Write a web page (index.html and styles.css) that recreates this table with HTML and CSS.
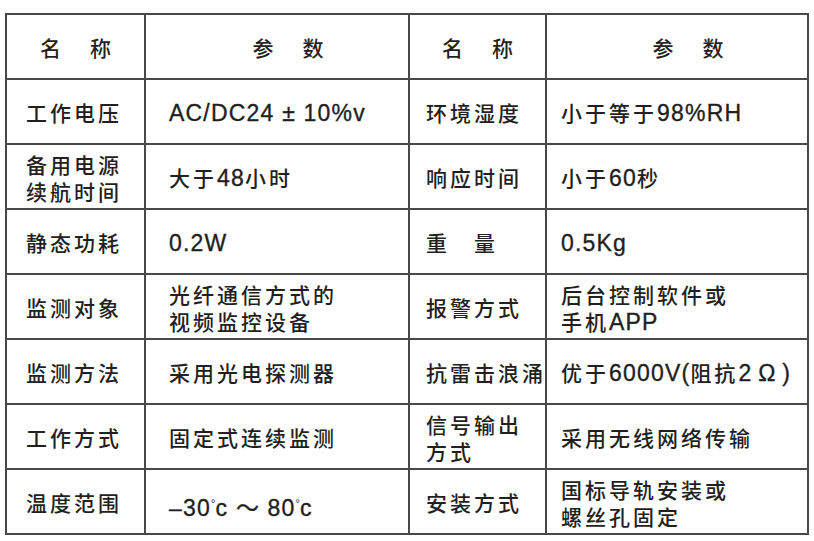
FILE: index.html
```html
<!DOCTYPE html>
<html lang="zh-CN">
<head>
<meta charset="utf-8">
<title>参数表</title>
<link rel="stylesheet" href="styles.css">
</head>
<body>
<div class="spec">
  <div class="cell c1 head"><div class="txt">名　称</div></div>
  <div class="cell c2 head"><div class="txt">参　数</div></div>
  <div class="cell c3 head"><div class="txt">名　称</div></div>
  <div class="cell c4 head"><div class="txt">参　数</div></div>

  <div class="cell c1"><div class="txt">工作电压</div></div>
  <div class="cell c2"><div class="txt"><span class="en">AC/DC24 ± 10%v</span></div></div>
  <div class="cell c3"><div class="txt">环境湿度</div></div>
  <div class="cell c4"><div class="txt">小于等于<span class="en">98%RH</span></div></div>

  <div class="cell c1"><div class="txt">备用电源<br>续航时间</div></div>
  <div class="cell c2"><div class="txt">大于<span class="en">48</span>小时</div></div>
  <div class="cell c3"><div class="txt">响应时间</div></div>
  <div class="cell c4"><div class="txt">小于<span class="en">60</span>秒</div></div>

  <div class="cell c1"><div class="txt">静态功耗</div></div>
  <div class="cell c2"><div class="txt"><span class="en">0.2W</span></div></div>
  <div class="cell c3"><div class="txt">重　量</div></div>
  <div class="cell c4"><div class="txt"><span class="en">0.5Kg</span></div></div>

  <div class="cell c1"><div class="txt">监测对象</div></div>
  <div class="cell c2"><div class="txt">光纤通信方式的<br>视频监控设备</div></div>
  <div class="cell c3"><div class="txt">报警方式</div></div>
  <div class="cell c4"><div class="txt">后台控制软件或<br>手机<span class="en">APP</span></div></div>

  <div class="cell c1"><div class="txt">监测方法</div></div>
  <div class="cell c2"><div class="txt">采用光电探测器</div></div>
  <div class="cell c3"><div class="txt">抗雷击浪涌</div></div>
  <div class="cell c4"><div class="txt">优于<span class="en">6000V(</span>阻抗<span class="en">2&thinsp;Ω&thinsp;)</span></div></div>

  <div class="cell c1"><div class="txt">工作方式</div></div>
  <div class="cell c2"><div class="txt">固定式连续监测</div></div>
  <div class="cell c3"><div class="txt">信号输出<br>方式</div></div>
  <div class="cell c4"><div class="txt">采用无线网络传输</div></div>

  <div class="cell c1"><div class="txt">温度范围</div></div>
  <div class="cell c2 low"><div class="txt"><span class="en">–30<sup class="deg">°</sup>c ～ 80<sup class="deg">°</sup>c</span></div></div>
  <div class="cell c3"><div class="txt">安装方式</div></div>
  <div class="cell c4"><div class="txt">国标导轨安装或<br>螺丝孔固定</div></div>
</div>
</body>
</html>
```

FILE: styles.css
```css
html, body {
  margin: 0;
  padding: 0;
  background: #ffffff;
}

body {
  padding: 13px 0 0 5px;
}

.spec {
  display: grid;
  grid-template-columns: 137px 262px 135px 260px;
  grid-auto-rows: 63px;
  gap: 2px;
  padding: 2px;
  width: 800px;
  background: #4a4747;
  font-family: "Noto Sans CJK SC", sans-serif;
  font-size: 21px;
  font-weight: 500;
  letter-spacing: 3px;
  line-height: 27px;
  color: #231f20;
}

.cell {
  background: #ffffff;
  display: flex;
  align-items: center;
  padding-top: 2px;
  box-sizing: border-box;
  white-space: nowrap;
}

.txt {
  line-height: 27px;
}

.en {
  font-family: "Liberation Sans", sans-serif;
  font-size: 23px;
  line-height: 20px;
  letter-spacing: 1.2px;
  -webkit-text-stroke: 0.35px #231f20;
}

.deg {
  font-size: 11px;
  line-height: 0;
  vertical-align: 0;
  position: relative;
  top: -9px;
  letter-spacing: 0;
  -webkit-text-stroke: 0;
}

.c1 { padding-left: 19px; }
.c2 { padding-left: 23px; }
.c3 { padding-left: 16px; }
.c4 { padding-left: 14px; }

.head {
  justify-content: center;
  letter-spacing: 4px;
  padding-left: 4px;
}

.c2.head, .c4.head {
  padding-left: 26px;
}

.low {
  padding-top: 12px;
}
```
